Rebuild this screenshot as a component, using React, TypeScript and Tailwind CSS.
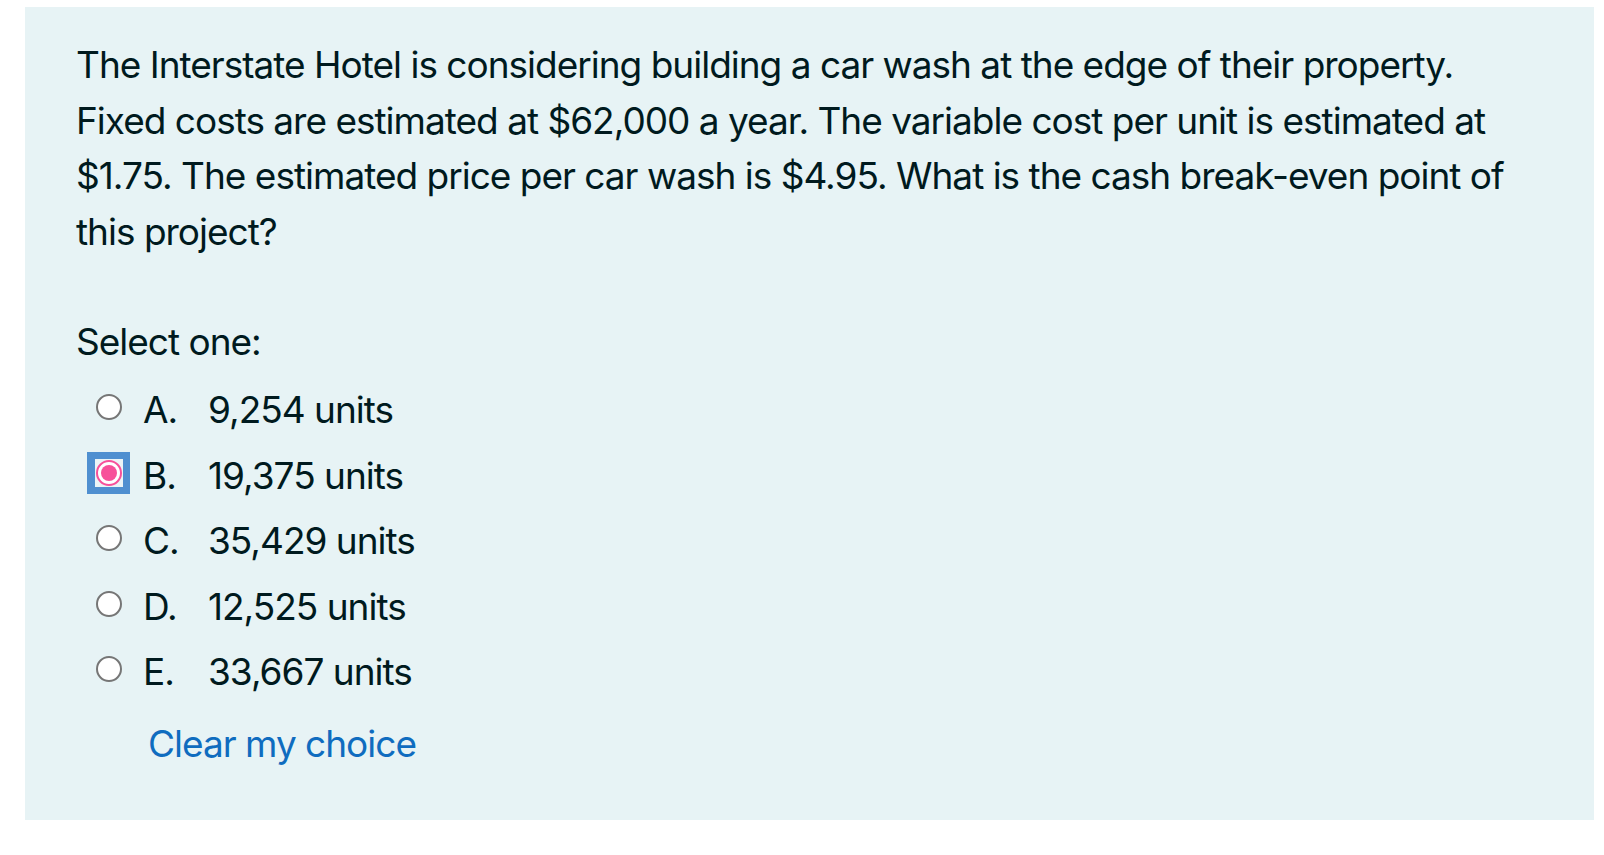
const OPTIONS = [
  { letter: 'A.', text: '9,254 units', checked: false },
  { letter: 'B.', text: '19,375 units', checked: true },
  { letter: 'C.', text: '35,429 units', checked: false },
  { letter: 'D.', text: '12,525 units', checked: false },
  { letter: 'E.', text: '33,667 units', checked: false },
]

function Radio({ checked }: { checked: boolean }) {
  if (checked) {
    return (
      <div className="w-[43px] h-[42px] bg-[#4f8fd0] flex items-center justify-center">
        <div className="w-[28px] h-[28px] bg-[#eaf4f7] flex items-center justify-center">
          <div className="w-[26px] h-[26px] rounded-full border-2 border-[#f7509a] bg-white flex items-center justify-center">
            <div className="w-[16px] h-[16px] rounded-full bg-[#f7509a]" />
          </div>
        </div>
      </div>
    )
  }
  return (
    <div className="w-[43px] h-[42px] flex items-center justify-center">
      <div className="w-[26px] h-[26px] rounded-full border-2 border-[#767676] bg-white" />
    </div>
  )
}

export default function App() {
  return (
    <div className="min-h-screen bg-white pt-[7px] pl-[25px] pr-[10px] font-['Inter',sans-serif] text-[#001a1e]">
      <div className="bg-[#e7f3f5] pt-[30px] pl-[51px] pr-[51px] pb-[49px] text-[37px] leading-[55.5px] tracking-[-1px]">
        <p>
          The Interstate Hotel is considering building a car wash at the edge of their property.
          Fixed costs are estimated at $62,000 a year. The variable cost per unit is estimated at
          $1.75. The estimated price per car wash is $4.95. What is the cash break-even point of
          this project?
        </p>

        <p className="mt-[55px]">Select one:</p>

        <div className="mt-[7.5px]">
          {OPTIONS.map((o) => (
            <div key={o.letter} className="flex items-start h-[65.5px]">
              <div className="ml-[11px] mt-[9px]">
                <Radio checked={o.checked} />
              </div>
              <div className="flex pt-[5px] ml-[13px]">
                <span className="w-[65px]">{o.letter}</span>
                <span>{o.text}</span>
              </div>
            </div>
          ))}
        </div>

        <a href="#" className="block mt-[11px] ml-[72px] text-[#0f6cbf]">
          Clear my choice
        </a>
      </div>
    </div>
  )
}
